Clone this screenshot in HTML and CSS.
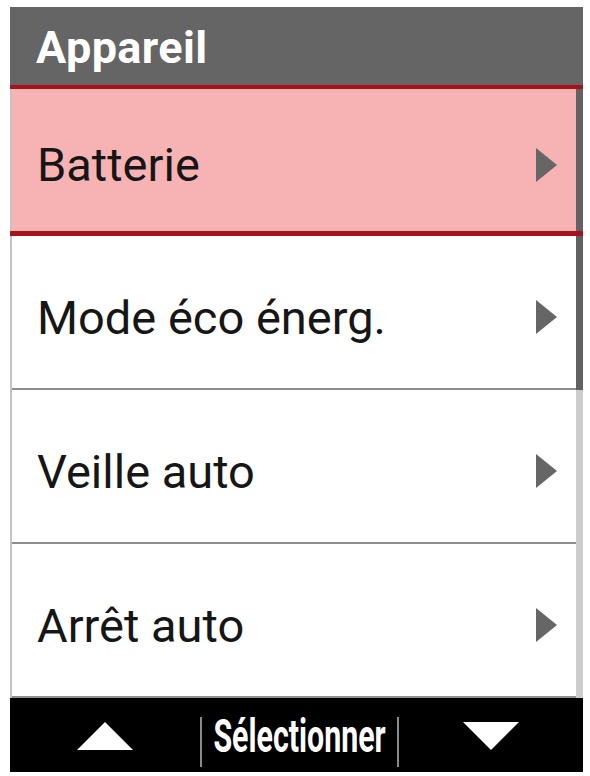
FILE: index.html
```html
<!DOCTYPE html>
<html lang="fr">
<head>
<meta charset="utf-8">
<title>Appareil</title>
<link rel="stylesheet" href="styles.css">
</head>
<body>
<div class="screen">
  <div class="header"><span class="title">Appareil</span></div>
  <div class="list">
    <div class="scrollbar"><div class="thumb"></div></div>
    <div class="row selected"><span class="label">Batterie</span><span class="arrow"></span></div>
    <div class="row"><span class="label">Mode éco énerg.</span><span class="arrow"></span></div>
    <div class="row"><span class="label">Veille auto</span><span class="arrow"></span></div>
    <div class="row"><span class="label">Arrêt auto</span><span class="arrow"></span></div>
  </div>
  <div class="footer">
    <div class="fbtn">
      <svg class="tri" width="56" height="28" viewBox="0 0 56 28"><polygon points="28,0 56,28 0,28" fill="#fff"/></svg>
    </div>
    <div class="fbtn mid"><span class="select">Sélectionner</span></div>
    <div class="fbtn">
      <svg class="tri" width="56" height="28" viewBox="0 0 56 28"><polygon points="0,0 56,0 28,28" fill="#fff"/></svg>
    </div>
  </div>
</div>
</body>
</html>
```
FILE: styles.css
```css
html, body {
  margin: 0;
  padding: 0;
  background: #ffffff;
}

.screen {
  margin: 7px 0 0 10px;
  width: 573px;
  font-family: Roboto, "Liberation Sans", sans-serif;
}

.header {
  height: 78px;
  background: #656565;
  padding-left: 26px;
  display: flex;
  align-items: center;
  box-sizing: border-box;
}

.title {
  color: #ffffff;
  font-weight: 700;
  font-size: 45px;
  letter-spacing: 0.4px;
  margin-top: 2px;
}

.list {
  position: relative;
  border-left: 2px solid #c4c4c4;
}

.scrollbar {
  position: absolute;
  top: 0;
  right: 0;
  bottom: 0;
  width: 7px;
  background: #cdcdcd;
  z-index: 1;
}

.thumb {
  margin-top: 4px;
  height: 301px;
  background: #616161;
}

.row {
  height: 154px;
  box-sizing: border-box;
  display: flex;
  align-items: center;
  justify-content: space-between;
  padding: 10px 26px 0 25px;
  border-bottom: 2px solid #8e8e8e;
  font-size: 47px;
  color: #161616;
  background: #ffffff;
}

.row.selected {
  position: relative;
  height: 151px;
  border-bottom: none;
  background: #f7b3b3;
  padding-top: 8px;
}

.row.selected::before,
.row.selected::after {
  content: "";
  position: absolute;
  left: -2px;
  right: 0;
  background: #a8121c;
  z-index: 2;
}

.row.selected::before {
  top: 0;
  height: 4px;
}

.row.selected::after {
  bottom: 0;
  height: 5px;
}

.arrow {
  width: 0;
  height: 0;
  border-left: 21px solid #666666;
  border-top: 17px solid transparent;
  border-bottom: 17px solid transparent;
}

.footer {
  height: 74px;
  background: #000000;
  display: grid;
  grid-template-columns: 190px 199px 1fr;
  align-items: center;
}

.fbtn {
  display: flex;
  justify-content: center;
  align-items: center;
}

.tri {
  display: block;
  margin-top: 2px;
}

.mid {
  height: 50px;
  margin-top: 14px;
  border-left: 2px solid #8a8a8a;
  border-right: 2px solid #8a8a8a;
  box-sizing: border-box;
  overflow: visible;
}

.select {
  flex-shrink: 0;
  display: inline-block;
  color: #ffffff;
  font-weight: 700;
  font-size: 46px;
  transform: scaleX(0.66);
  margin-top: -12px;
}
```
